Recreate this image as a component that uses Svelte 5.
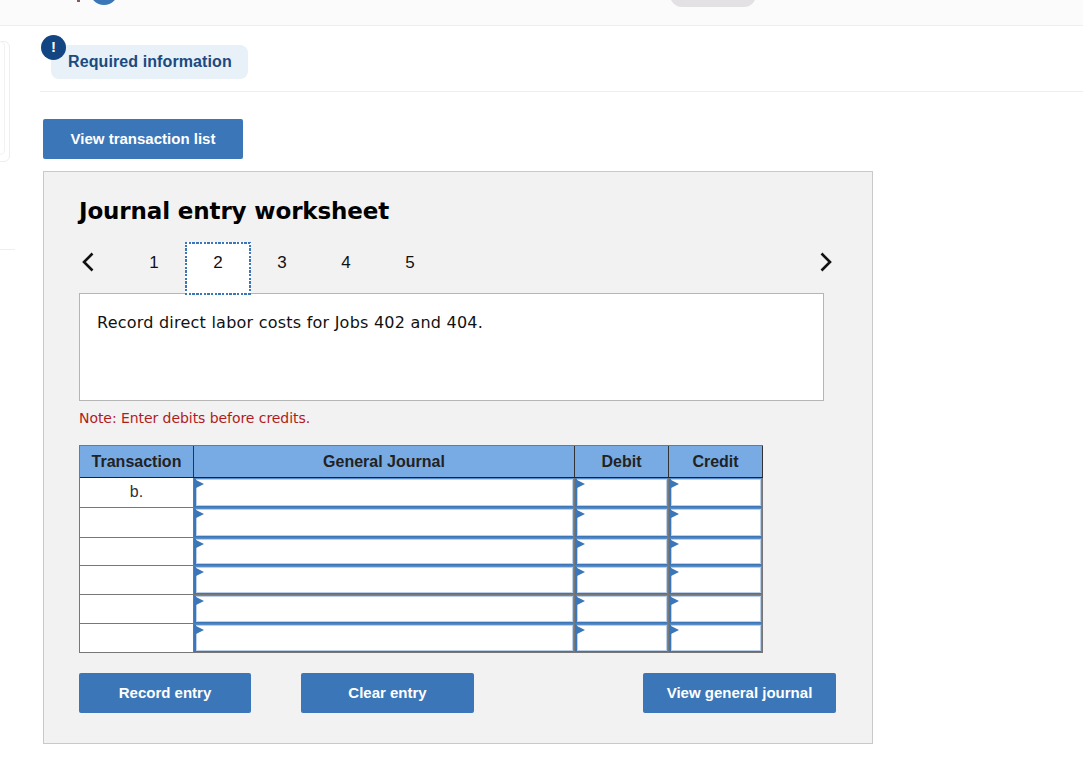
<script>
  const tabs = [1, 2, 3, 4, 5];
  const rows = ['b.', '', '', '', '', ''];
</script>

<div class="page">
  <header class="top">
    <span class="tick"></span>
    <span class="avatar"></span>
    <span class="pill"></span>
  </header>
  <span class="side-card"><span class="side-inner"></span></span>
  <span class="side-line"></span>

  <main class="main">
    <div class="req-wrap">
      <div class="req">
        <span class="bang">!</span>
        <span>Required information</span>
      </div>
    </div>

    <button class="btn list-btn">View transaction list</button>

    <section class="panel">
      <h1>Journal entry worksheet</h1>

      <nav class="tabs">
        <svg class="arrow" viewBox="0 0 14 20" width="14" height="20"><path d="M11.500 1.500 3 10l8.500 8.500" fill="none" stroke="#111" stroke-width="2.600"/></svg>
        <div class="nums">
          {#each tabs as t}
            <span class="tab" class:active={t === 2}>{t}</span>
          {/each}
        </div>
        <svg class="arrow" viewBox="0 0 14 20" width="14" height="20"><path d="M2.500 1.500 11 10l-8.500 8.500" fill="none" stroke="#111" stroke-width="2.600"/></svg>
      </nav>

      <div class="prompt">Record direct labor costs for Jobs 402 and 404.</div>
      <p class="note">Note: Enter debits before credits.</p>

      <div class="grid">
        <div class="th">Transaction</div>
        <div class="th">General Journal</div>
        <div class="th">Debit</div>
        <div class="th">Credit</div>
        {#each rows as r}
          <div class="td label">{r}</div>
          <div class="td"><div class="field"></div></div>
          <div class="td"><div class="field"></div></div>
          <div class="td"><div class="field"></div></div>
        {/each}
      </div>

      <div class="actions">
        <button class="btn record">Record entry</button>
        <button class="btn clear">Clear entry</button>
        <button class="btn view">View general journal</button>
      </div>
    </section>
  </main>
</div>

<style>
  :global(body) {
    margin: 0;
    background: #fff;
    font-family: "Liberation Sans", Arial, sans-serif;
  }
  .page {
    position: relative;
    width: 1083px;
    height: 768px;
    overflow: hidden;
  }
  .top {
    height: 25px;
    background: #fbfbfb;
    border-bottom: 1px solid #eeeeee;
    position: relative;
  }
  .tick {
    position: absolute;
    left: 77px;
    top: 0;
    width: 3px;
    height: 2px;
    background: #8a5a5a;
  }
  .avatar {
    position: absolute;
    left: 90px;
    top: -23px;
    width: 28px;
    height: 28px;
    border-radius: 50%;
    background: #3b76b9;
  }
  .pill {
    position: absolute;
    left: 670px;
    top: -20px;
    width: 86px;
    height: 27px;
    border-radius: 12px;
    background: #e3e1e3;
  }
  .side-card {
    position: absolute;
    left: -12px;
    top: 41px;
    width: 20px;
    height: 119px;
    border: 1px solid #eeeeee;
    border-radius: 6px;
  }
  .side-inner {
    position: absolute;
    left: -6px;
    top: -1px;
    width: 20px;
    height: 112px;
    border: 1px solid #f2f2f2;
    border-radius: 5px;
  }
  .side-line {
    position: absolute;
    left: 0;
    top: 249px;
    width: 15px;
    height: 1px;
    background: #eeeeee;
  }
  .main {
    padding-left: 40px;
  }
  .req-wrap {
    padding: 19px 0 12px 11px;
    border-bottom: 1px solid #eeeeee;
  }
  .req {
    position: relative;
    display: inline-block;
    box-sizing: border-box;
    width: 197px;
    height: 34px;
    padding: 7px 0 0 17px;
    background: #e8f0f8;
    border-radius: 8px;
    color: #1a4a80;
    font-size: 16px;
    font-weight: 700;
    line-height: 19px;
    letter-spacing: 0.1px;
    vertical-align: top;
  }
  .bang {
    position: absolute;
    left: -10px;
    top: -10px;
    width: 25px;
    height: 25px;
    border-radius: 50%;
    background: #134582;
    color: #fff;
    font-size: 15px;
    line-height: 23px;
    text-align: center;
  }
  .btn {
    display: block;
    height: 40px;
    padding: 0;
    border: 0;
    border-radius: 2px;
    background: #3b76b9;
    color: #fff;
    font: 700 15px/40px "Liberation Sans", Arial, sans-serif;
    text-align: center;
  }
  .list-btn {
    width: 200px;
    margin: 27px 0 12px 3px;
  }
  .panel {
    box-sizing: border-box;
    width: 830px;
    height: 573px;
    margin-left: 3px;
    padding: 24px 35px 0;
    background: #f2f2f2;
    border: 1px solid #c9c9c9;
  }
  h1 {
    margin: 0;
    height: 30px;
    font: 700 23px/30px "DejaVu Sans", Verdana, sans-serif;
    letter-spacing: -0.13px;
    color: #000;
  }
  .tabs {
    display: flex;
    align-items: flex-start;
    justify-content: space-between;
    width: 756px;
    height: 53px;
    margin-top: 16px;
    position: relative;
    z-index: 1;
    box-sizing: border-box;
    padding: 0 2px;
  }
  .arrow {
    margin-top: 10px;
    flex: none;
  }
  .nums {
    display: flex;
    margin-left: 27px;
    margin-right: auto;
  }
  .tab {
    box-sizing: border-box;
    width: 64px;
    height: 53px;
    color: #111;
    font-size: 17px;
    line-height: 42px;
    text-align: center;
  }
  .tab.active {
    width: 66px;
    margin: 0 -1px;
    background-color: #fff;
    background-image:
      repeating-linear-gradient(90deg, #3b76b9 0 2.400px, transparent 2.400px 3.700px),
      repeating-linear-gradient(90deg, #3b76b9 0 2.400px, transparent 2.400px 3.700px),
      repeating-linear-gradient(0deg, #3b76b9 0 2.400px, transparent 2.400px 3.700px),
      repeating-linear-gradient(0deg, #3b76b9 0 2.400px, transparent 2.400px 3.700px);
    background-size: 100% 2px, 100% 2px, 2px 100%, 2px 100%;
    background-position: 0 0, 0 100%, 0 0, 100% 0;
    background-repeat: no-repeat;
  }
  .prompt {
    box-sizing: border-box;
    width: 745px;
    height: 108px;
    margin-top: -2px;
    padding: 18px 17px;
    background: #fff;
    border: 1px solid #b5b5b5;
    font: 16px/21px "DejaVu Sans", Verdana, sans-serif;
    letter-spacing: 0.23px;
    color: #111;
  }
  .note {
    margin: 8px 0 0;
    height: 36px;
    font: 14px/18px "DejaVu Sans", Verdana, sans-serif;
    letter-spacing: -0.06px;
    color: #b01c1c;
  }
  .grid {
    display: grid;
    grid-template-columns: 114px 381px 94px 94px;
    grid-template-rows: 32px 30px 30px 28px 29px 29px 29px;
    width: 684px;
    box-sizing: border-box;
    border: solid #777;
    border-width: 1px 0 0 1px;
    background: #fff;
  }
  .th {
    box-sizing: border-box;
    background: #78abe4;
    border-right: 1px solid #333;
    border-bottom: 1px solid #222;
    color: #222;
    font-size: 16px;
    font-weight: 700;
    line-height: 31px;
    text-align: center;
  }
  .td {
    box-sizing: border-box;
    border-right: 1px solid #777;
    border-bottom: 1px solid #777;
    min-width: 0;
  }
  .label {
    font-size: 16px;
    line-height: 28px;
    text-align: center;
    color: #333;
  }
  .field {
    box-sizing: border-box;
    height: 100%;
    border: 1px solid #5a8cc6;
    border-left: 2px solid #3b76b9;
    border-bottom-color: #3b76b9;
    box-shadow: inset 0 0 0 1px #bcd0ea;
    position: relative;
    background: #fff;
  }
  .field::before {
    content: "";
    position: absolute;
    left: -2px;
    top: 0;
    width: 0;
    height: 0;
    border-left: 10px solid #3b76b9;
    border-top: 5px solid transparent;
    border-bottom: 5px solid transparent;
  }
  .actions {
    display: flex;
    width: 757px;
    margin-top: 20px;
  }
  .record { width: 172px; }
  .clear { width: 173px; margin-left: 50px; }
  .view { width: 193px; margin-left: auto; }
</style>
